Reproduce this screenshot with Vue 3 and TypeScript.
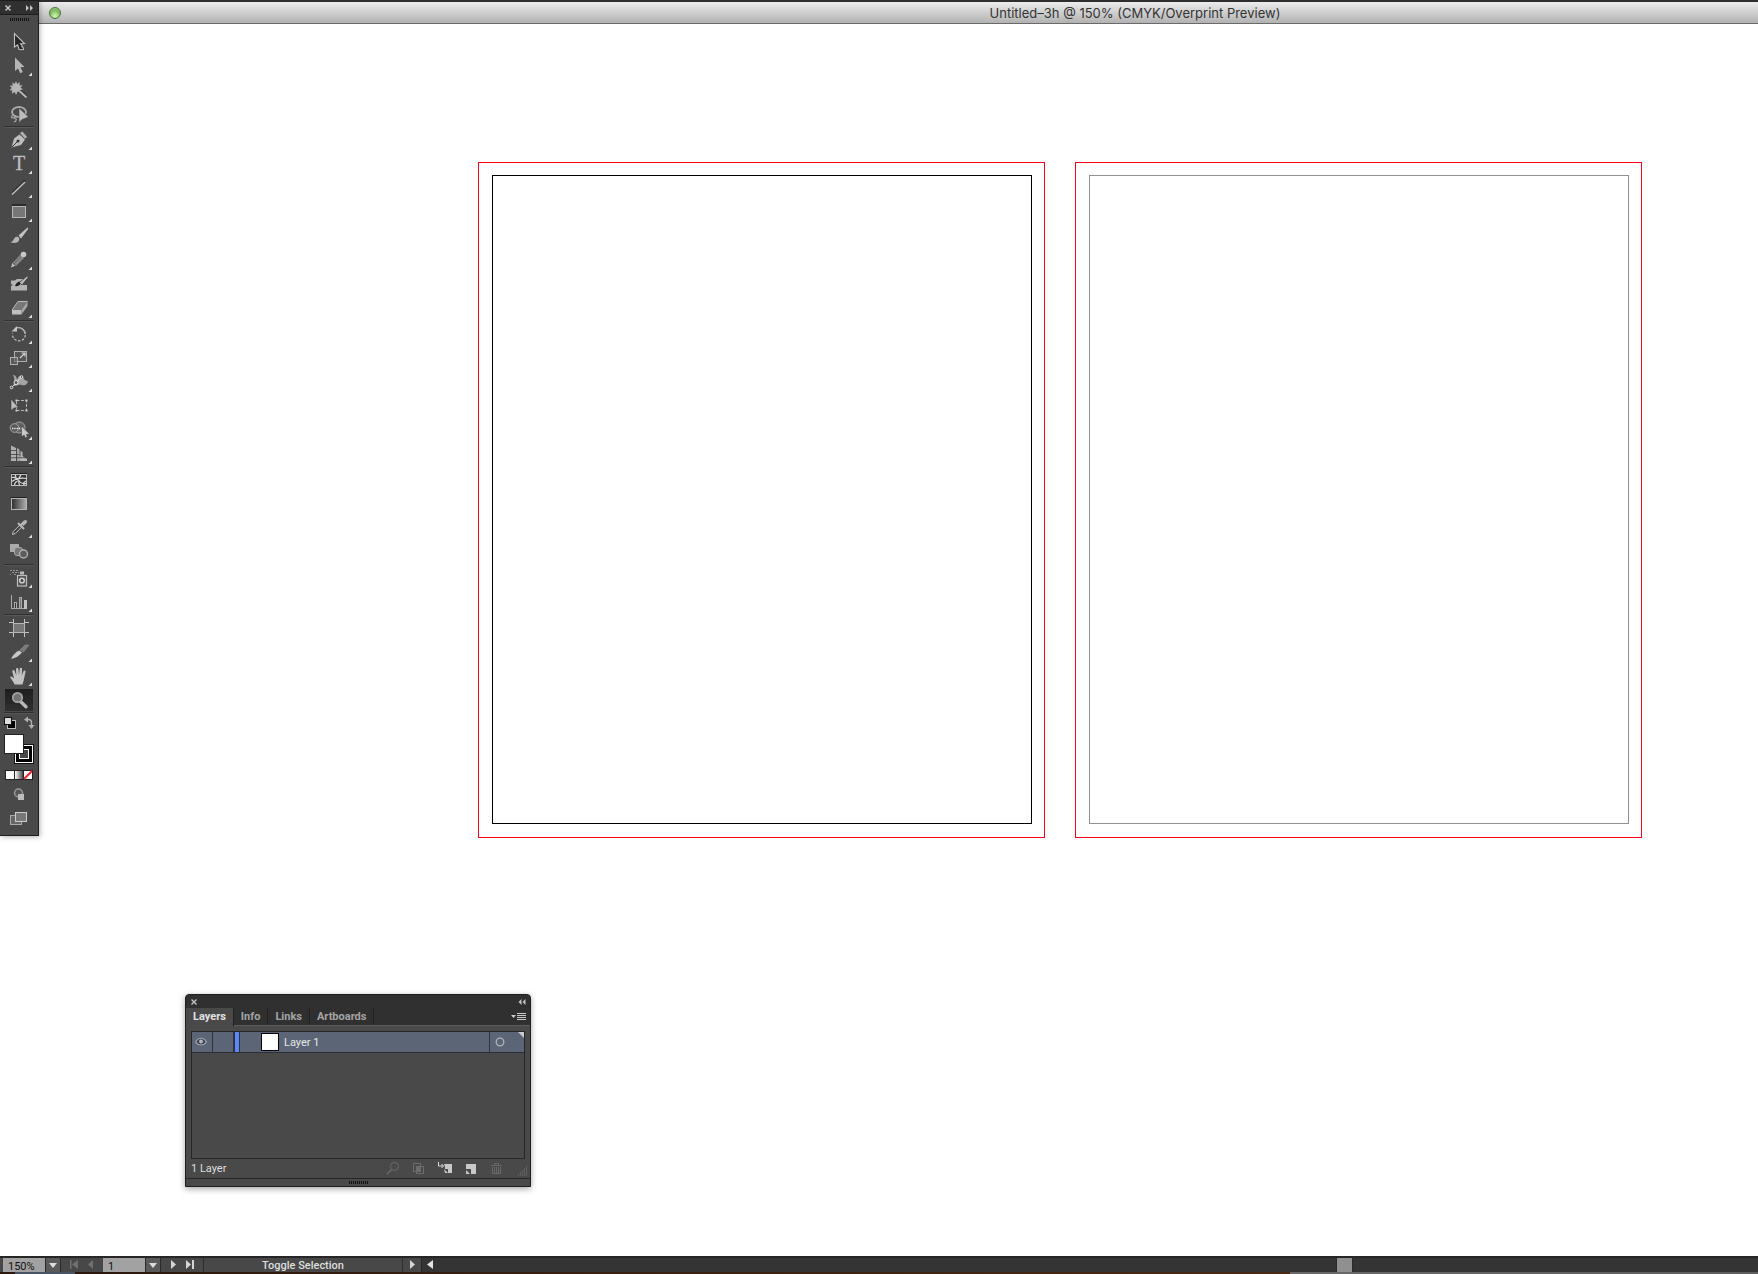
<script setup lang="ts">
import { ref } from 'vue'

interface Tool {
  name: string
  art: string
  more?: boolean
}

const groups: Tool[][] = [
  [
    { name: 'Selection', art: '<path d="M14.5 3.5V17l3.2-2.2 1.3 4.6 1.6.4 2.9-.2-.6-2.6-.9-.2v-1.5l-1.5-1.5 4-.3z" fill="#262626" stroke="#c4c4c4" stroke-width="1.1"/>' },
    { name: 'Direct Selection', more: true, art: '<path d="M15 3.5V17l3-2.6 2.2 4.8 2.6-1.2-2.3-4.7 4-.4z" fill="#b4b4b4"/>' },
    { name: 'Magic Wand', art: '<path d="M16 3l1.200 3 2.600-2-.3 3.200 3.200.3-2.300 2 2.600 2-3.300.4.7 2.800-2.600-1.500L16 17l-1.300-3-2.900 1.700.5-3.100-2.800-.7 2.300-1.800-2.200-2.300 3.200-.2-.5-3.400 2.400 1.800z" fill="#b6b6b6"/><path d="M20 13l6.500 6.400" stroke="#222" stroke-width="3"/><path d="M19.500 13l7 6.500" stroke="#b6b6b6" stroke-width="2.200"/>' },
    { name: 'Lasso', art: '<ellipse cx="19" cy="10" rx="7" ry="5" fill="none" stroke="#aaa" stroke-width="1.8"/><path d="M13 13.500c-2 0-2 2.500 0 2.500s3-2 1-2.500M14 16c3 0 3 3 0 4" fill="none" stroke="#aaa" stroke-width="1.200"/><path d="M19 6v14.500l3-3 6.500-2.500z" fill="#bdbdbd" stroke="#444" stroke-width=".6"/>' },
  ],
  [
    { name: 'Pen', more: true, art: '<path d="M11.500 19.500L14 10.500l5.500-4 5.500 5-4 5.500z" fill="#bebebe"/><path d="M19.500 5l3-2 5 6-2.500 2.200z" fill="#b0b0b0" stroke="#3c3c3c" stroke-width=".6"/><path d="M12 19l6-6" stroke="#333"/><circle cx="18" cy="13" r="1.500" fill="#333"/>' },
    { name: 'Type', more: true, art: '<text x="19" y="18" text-anchor="middle" font-family="Liberation Serif, serif" font-size="20" fill="#bdbdbd" stroke="#bdbdbd" stroke-width=".3">T</text>' },
    { name: 'Line Segment', more: true, art: '<path d="M12 17L25 4.500" stroke="#262626" stroke-width="1.500"/><path d="M12 18.500L25 6" stroke="#bbb" stroke-width="1.700"/>' },
    { name: 'Rectangle', more: true, art: '<path d="M12 5h14" stroke="#222" stroke-width="1.500"/><rect x="12.500" y="6.500" width="13" height="11" fill="#777" stroke="#b8b8b8"/>' },
    { name: 'Paintbrush', art: '<path d="M18.500 11.500l9-8 .8 1.200-7.300 9.800z" fill="#c2c2c2"/><path d="M10 18c3 0 3-2 4.500-4 2-2.500 6-.5 4.500 2.500-1.500 3-6 3-9 1.500z" fill="#b4b4b4"/>' },
    { name: 'Pencil', more: true, art: '<path d="M11 19.500l1.500-5 3.500 3z" fill="#c4c4c4"/><path d="M12.500 14.500l8-8.500 4 4-8.500 8.500z" fill="#858585" stroke="#333" stroke-width=".5"/><path d="M13.500 16.500l8.500-9" stroke="#6a6a6a"/><circle cx="23.500" cy="6.500" r="2.800" fill="#c8c8c8"/>' },
    { name: 'Blob Brush', art: '<path d="M11 8.500h4l2-1.500h6v6h4v5.500H11V14l2-1-2-1z" fill="#b4b4b4"/><path d="M15 14c1-3.500 3.500-5 6-4.500l-.5 2.500c-1.500 2-3.500 2.500-5.500 2z" fill="#222"/><path d="M19.500 10.500l7.500-6.500 1.500 1L22 13z" fill="#bdbdbd" stroke="#2c2c2c" stroke-width=".7"/>' },
    { name: 'Eraser', more: true, art: '<path d="M18 5.500h9.500l-6 8.500H12z" fill="#777"/><path d="M12 14h9.500v4.500H12z" fill="#c0c0c0"/><path d="M21.500 14l6-8.500v4.500l-6 8.500z" fill="#a8a8a8"/><path d="M12 14l6-8.500h9.500" fill="none" stroke="#bbb"/>' },
  ],
  [
    { name: 'Rotate', more: true, art: '<path d="M15 6.500c5-2.500 10 1 10.300 5.500" fill="none" stroke="#b8b8b8" stroke-width="1.300"/><path d="M25.300 13c-.5 8-13 8-13-1.500" fill="none" stroke="#b8b8b8" stroke-width="1.300" stroke-dasharray="2.500 1.500"/><path d="M17 4v5.500h-5.500z" fill="#c4c4c4"/>' },
    { name: 'Scale', more: true, art: '<rect x="14.500" y="5.500" width="12" height="10" fill="#555" stroke="#b0b0b0"/><rect x="10.500" y="11.500" width="7" height="7" fill="#666" fill-opacity=".6" stroke="#b0b0b0"/><path d="M20 12l5-5M21.500 7H25v3.500" fill="none" stroke="#d0d0d0" stroke-width="1.200"/>' },
    { name: 'Width', more: true, art: '<path d="M13 5c2.500-.5 3.500 2 4 5 1-3 2.500-5 4.500-4 3 1 1.500 5 6.500 5-1 4-3 5-6.500 4-3-1-5 1-8 1 1-4 1.500-7-.5-11z" fill="#a4a4a4"/><path d="M11.500 17.500l10-10.500" stroke="#ddd"/><g fill="#444" stroke="#e4e4e4"><circle cx="11.500" cy="17.500" r="1.300"/><circle cx="16" cy="12.500" r="2" fill="#555"/><circle cx="21.500" cy="7" r="1.300"/></g>' },
    { name: 'Free Transform', art: '<rect x="16.500" y="6.500" width="10" height="10" fill="none" stroke="#b5b5b5" stroke-dasharray="3 1.500"/><path d="M15.500 5.500h2v2h-2zM25.500 5.500h2v2h-2zM25.500 15.500h2v2h-2zM15.500 15.500h2v2h-2z" fill="#ccc"/><path d="M11 5v11.500l3-2.500 4.500-.5z" fill="#bbb" stroke="#333" stroke-width=".5"/>' },
    { name: 'Shape Builder', more: true, art: '<g fill="#606060" stroke="#aaa"><circle cx="19.500" cy="9.500" r="5.500"/><circle cx="14.500" cy="10" r="4.300" fill="#585858"/></g><path d="M12 10.500h11" stroke="#eee" stroke-width="1.300" stroke-dasharray="1.300 1"/><path d="M21.500 8v11l2.500-2 1.500 3 2-1-1.200-2.500 3.200-.5z" fill="#c8c8c8" stroke="#333" stroke-width=".5"/>' },
    { name: 'Perspective Grid', more: true, art: '<path d="M11 3.500l5 2.500V19h-5z" fill="#b0b0b0"/><path d="M17 6l2.500 1.500V14l4 1.500V19H17z" fill="#a4a4a4"/><path d="M20.500 9l2 1V14l4.500 3v2h-6.500z" fill="#b8b8b8"/><path d="M11 8.500h5M11 12.500h8M11 15.700h15" stroke="#404040" stroke-width=".8"/>' },
  ],
  [
    { name: 'Mesh', art: '<path d="M11 5.500h16" stroke="#222"/><rect x="11.500" y="6.500" width="15" height="11" fill="#363636" stroke="#bcbcbc"/><path d="M12 9.500c5-1 6 2 7.500 4s4 2.500 7 2M21 7c-3 3-3 6-1.500 10.500M12 13.500c4-3 9-4 14.500-3M14.500 17c0-2 1-3 3-4M15 7c1 1 1 2 0 3M24 17c-1-2 0-3 2-4" fill="none" stroke="#d8d8d8" stroke-width="1.200"/>' },
    { name: 'Gradient', art: '<defs><linearGradient id="toolGradient"><stop stop-color="#2c2c2c"/><stop offset="1" stop-color="#b0b0b0"/></linearGradient></defs><path d="M11 5.500h16" stroke="#222"/><rect x="11.500" y="6.500" width="15" height="11" fill="url(#toolGradient)" stroke="#b4b4b4"/>' },
    { name: 'Eyedropper', more: true, art: '<path d="M12.500 18.500l.8-3 6.500-6.500 2 2-6.500 6.500z" fill="#444" stroke="#c4c4c4"/><path d="M18 7l6 6M20.500 9.500l3.500-3.500" stroke="#bbb" stroke-width="2"/><path d="M21 7.500L24 4.500c2-1.500 4 .5 2.500 2.500L23.500 10z" fill="#b4b4b4"/>' },
    { name: 'Blend', art: '<path d="M10 4h9v8h-9z" fill="#aaa"/><rect x="14.500" y="7.500" width="8" height="8" rx="2.500" fill="#777" stroke="#a8a8a8"/><circle cx="23.500" cy="14" r="4" fill="#5c5c5c" stroke="#b0b0b0" stroke-width="1.500"/>' },
  ],
  [
    { name: 'Symbol Sprayer', more: true, art: '<path d="M10 4.500h2m1 0h2m1 0h2M12 6.500h2m1 0h2m1 0h1M10 8.500h1m3 0h2" stroke="#999" stroke-width="1.200"/><path d="M20 5.500h4v3h-4z" fill="#bbb"/><rect x="17.500" y="9.500" width="9" height="10.500" fill="#505050" stroke="#bdbdbd" stroke-width="1.200"/><circle cx="22" cy="14.500" r="2.300" fill="#444" stroke="#ccc" stroke-width="1.600"/>' },
    { name: 'Column Graph', more: true, art: '<path d="M11.500 5v14M11 18.500h16" stroke="#aaa"/><rect x="14.500" y="12.500" width="2" height="6" fill="#333" stroke="#aaa"/><rect x="19.500" y="7.500" width="2" height="11" fill="#777" stroke="#aaa"/><rect x="24" y="10" width="3" height="9" fill="#c2c2c2"/>' },
  ],
  [
    { name: 'Artboard', art: '<path d="M9 6.500h5M24 6.500h5M9 16.500h4M25 16.500h4M13.500 3v4M24.500 3v4M13.500 17v4M24.500 17v4" stroke="#c4c4c4"/><rect x="13.500" y="7.500" width="11" height="9" fill="#777" stroke="#b4b4b4"/>' },
    { name: 'Slice', more: true, art: '<path d="M11 19c2-4.500 5-7 8-8.500l3 2c-3 3.500-6 5.500-11 6.500z" fill="#c8c8c8"/><path d="M20 10L25 5h4l-5.500 7z" fill="#7a7a7a" stroke="#999" stroke-width=".5"/>' },
    { name: 'Hand', more: true, art: '<path d="M14.500 20.500c-1-3-3.500-5.500-4.500-7.500 1-1.500 2.500 0 4 1.500L12.300 7c.3-1.500 2-1.200 2.400 0l1.600 4.500L16 5c.2-1.500 2.200-1.500 2.400 0l.6 6 .8-6.500c.4-1.300 2.200-1 2.300.5l-.3 6.500 1.700-4.500c.7-1.200 2.300-.5 2 1l-1.500 7c-.3 2-1 3.500-1.500 5.500z" fill="#c2c2c2"/>' },
    { name: 'Zoom', art: '<path d="M21 14l5 4.800" stroke="#b8b8b8" stroke-width="3.400" stroke-linecap="round"/><circle cx="17.500" cy="9.500" r="4.700" fill="#747474" stroke="#a4a4a4" stroke-width="1.700"/>' },
  ],
]

const activeTool = ref('Zoom')
const tabs = ['Layers', 'Info', 'Links', 'Artboards']
const activeTab = ref('Layers')
const zoomLevel = ref('150%')
const artboard = ref('1')
</script>

<template>
  <div class="workspace">
    <header class="titlebar">
      <button class="maximize" aria-label="Zoom window"></button>
      <h1>Untitled–3h @ 150% (CMYK/Overprint Preview)</h1>
    </header>

    <main class="canvas">
      <div class="bleed"><div class="artboard current"></div></div>
      <div class="bleed"><div class="artboard"></div></div>
    </main>

    <footer class="status">
      <div class="status-row">
        <input v-model="zoomLevel" class="field" aria-label="Zoom level" />
        <button class="drop" aria-label="Zoom presets"><svg width="14" height="14"><path d="M3 5h8l-4 5z" fill="#ddd" /></svg></button>
        <div class="nav">
          <button aria-label="First artboard"><svg width="14" height="14"><path d="M4 2h1.500v9H4zM12 2v9L6 6.500z" fill="#707070" /></svg></button>
          <button aria-label="Previous artboard"><svg width="14" height="14"><path d="M9 2v9L4 6.500z" fill="#707070" /></svg></button>
        </div>
        <input v-model="artboard" class="field" aria-label="Artboard number" />
        <button class="drop" aria-label="Artboard list"><svg width="14" height="14"><path d="M3 5h8l-4 5z" fill="#ddd" /></svg></button>
        <div class="nav next">
          <button aria-label="Next artboard"><svg width="14" height="14"><path d="M4 2v9l5-4.500z" fill="#d4d4d4" /></svg></button>
          <button aria-label="Last artboard"><svg width="14" height="14"><path d="M3 2v9l5-4.500zM9 2h2v9H9z" fill="#d4d4d4" /></svg></button>
        </div>
        <span class="message">Toggle Selection</span>
        <button class="more" aria-label="Status options"><svg width="16" height="14"><path d="M6 2v9l5-4.500z" fill="#d4d4d4" /></svg></button>
        <div class="scroll">
          <button aria-label="Scroll left"><svg width="14" height="14"><path d="M11 2v9L5 6.500z" fill="#e4e4e4" /></svg></button>
          <div class="track"><div class="thumb"></div></div>
        </div>
      </div>
      <div class="desk"></div>
    </footer>

    <aside class="tools" aria-label="Tools">
      <div class="tools-head">
        <button aria-label="Close tools"><svg width="8" height="8"><path d="M1.500 1.500l5 5M6.500 1.500l-5 5" stroke="#c4c4c4" stroke-width="1.500" /></svg></button>
        <button aria-label="Expand tools"><svg width="8" height="8"><path d="M1 1l3 3-3 3zM5 1l3 3-3 3z" fill="#c4c4c4" /></svg></button>
      </div>
      <div class="tools-grip"><span class="ticks"></span></div>
      <div v-for="(group, i) in groups" :key="i" class="tool-group">
        <button
          v-for="tool in group"
          :key="tool.name"
          class="tool"
          :class="{ active: tool.name === activeTool }"
          :aria-label="tool.name"
          @click="activeTool = tool.name"
        >
          <svg width="38" height="24" viewBox="0 0 38 24">
            <g v-html="tool.art"></g>
            <path v-if="tool.more" d="M32 18.500V22h-3.500z" fill="#ddd" />
          </svg>
        </button>
      </div>
      <svg class="swatches" width="38" height="69" viewBox="0 0 38 69" role="img" aria-label="Fill and stroke">
        <defs>
          <linearGradient id="modeGradient"><stop stop-color="#fff" /><stop offset="1" stop-color="#444" /></linearGradient>
        </defs>
        <rect x="7.500" y="6.500" width="8" height="8" fill="#000" stroke="#bbb" />
        <rect x="4.500" y="3.500" width="7" height="7" fill="#ddd" stroke="#111" />
        <path d="M26 5.500h2.500q3 0 3 3V13" fill="none" stroke="#b0b0b0" stroke-width="1.300" />
        <path d="M28 2.500v6l-4-3zM28.500 11h6l-3 4z" fill="#b0b0b0" />
        <rect x="14" y="30" width="20" height="20" fill="#111" />
        <rect x="15.500" y="31.500" width="17" height="17" fill="#000" stroke="#fff" />
        <rect x="19.500" y="35.500" width="9" height="9" fill="#484848" stroke="#fff" />
        <rect x="4" y="20" width="20" height="20" fill="#222" />
        <rect x="5" y="21" width="18" height="18" fill="#fff" />
        <rect x="5" y="56" width="28" height="10" fill="#222" />
        <rect x="6" y="57" width="8" height="8" fill="#fff" />
        <rect x="15" y="57" width="8" height="8" fill="url(#modeGradient)" />
        <rect x="24" y="57" width="8" height="8" fill="#fff" />
        <path d="M24 65l8-8" stroke="#f0202c" stroke-width="2" />
      </svg>
      <button class="tool" aria-label="Drawing mode">
        <svg width="38" height="24"><circle cx="18.500" cy="10" r="4" fill="#555" stroke="#999" stroke-width="1.500" /><path d="M18 11h6v6h-6z" fill="#bcbcbc" /></svg>
      </button>
      <button class="tool" aria-label="Screen mode">
        <svg width="38" height="24"><rect x="10.500" y="8.500" width="11" height="9" fill="#666" stroke="#aaa" /><rect x="15.500" y="5.500" width="11" height="9" fill="#777" stroke="#ccc" /></svg>
      </button>
    </aside>

    <section class="panel" aria-label="Layers panel">
      <div class="panel-head">
        <button aria-label="Close panel"><svg width="8" height="8"><path d="M1.500 1.500l5 5M6.500 1.500l-5 5" stroke="#c4c4c4" stroke-width="1.400" /></svg></button>
        <button aria-label="Collapse panel"><svg width="8" height="8"><path d="M3.500 1l-3 3 3 3zM7.500 1l-3 3 3 3z" fill="#c4c4c4" /></svg></button>
      </div>
      <div class="tabs">
        <button v-for="tab in tabs" :key="tab" class="tab" :class="{ on: tab === activeTab }" @click="activeTab = tab">{{ tab }}</button>
        <button class="menu" aria-label="Panel menu"><svg width="15" height="10"><path d="M0 3h5L2.500 6z" fill="#ccc" /><path d="M6 1.500h9M6 3.500h9M6 5.500h9M6 7.500h9" stroke="#ccc" /></svg></button>
      </div>
      <div class="list">
        <div class="layer">
          <button class="eye" aria-label="Toggle visibility"><svg width="12" height="10"><path d="M.5 5c3-5 8-5 11 0-3 4-8 4-11 0z" fill="#3c4350" stroke="#a4a8ae" stroke-width="1.200" /><circle cx="6" cy="4.500" r="2" fill="#b4b7bc" /></svg></button>
          <span class="lock"></span>
          <span class="tint"></span>
          <span class="thumbnail"></span>
          <span class="layer-name">Layer 1</span>
          <button class="target" aria-label="Target layer"><svg width="10" height="10"><circle cx="5" cy="5" r="3.800" fill="none" stroke="#b0b4ba" stroke-width="1.300" /></svg></button>
          <svg class="corner" width="6" height="6"><path d="M0 0h6v6z" fill="#ccc" /></svg>
        </div>
      </div>
      <div class="panel-foot">
        <span class="count">1 Layer</span>
        <div class="actions">
          <button aria-label="Locate object"><svg width="14" height="14"><circle cx="8.500" cy="5.500" r="4" fill="none" stroke="#6c6c6c" /><path d="M5.500 8.500L1 13" stroke="#6c6c6c" stroke-width="1.300" /></svg></button>
          <button aria-label="Clipping mask"><svg width="14" height="14"><rect x="1.500" y="2.500" width="7" height="8" fill="none" stroke="#6c6c6c" /><rect x="4.500" y="5.500" width="7" height="7" fill="none" stroke="#6c6c6c" /><path d="M5 5h4v6H5z" fill="#6c6c6c" /></svg></button>
          <button aria-label="New sublayer"><svg width="14" height="14"><path d="M6 3h8v9h-4V8H7V6z" fill="#c8c8c8" /><path d="M6 8l4 4H7z" fill="#c8c8c8" /><path d="M.5 1v4h5M3.500 3l2 2-2 2" fill="none" stroke="#ddd" /></svg></button>
          <button aria-label="New layer"><svg width="14" height="14"><path d="M2 3h10v10H7V8H2z" fill="#c8c8c8" /><path d="M2 9l4 4H2z" fill="#c8c8c8" /></svg></button>
          <button aria-label="Delete layer"><svg width="14" height="14"><path d="M1 4.500h11M4.500 4V2.500h4V4M2.500 6v6.500h8V6M4.500 6v6M6.500 6v6M8.500 6v6" fill="none" stroke="#686868" /></svg></button>
        </div>
        <svg class="resize" width="10" height="10"><path d="M8 1h1M6 3h3M4 5h5M2 7h7M0 9h9" stroke="#777" stroke-dasharray="1 1" /></svg>
      </div>
      <div class="panel-grip"><span class="ticks"></span></div>
    </section>
  </div>
</template>

<style>
body { margin: 0; background: #fff; }
</style>

<style scoped>
* { box-sizing: border-box; }
button { display: flex; align-items: center; justify-content: center; padding: 0; border: 0; background: none; font: inherit; color: inherit; }
svg { display: block; flex: none; }
.workspace { position: relative; display: flex; flex-direction: column; min-height: 100vh; overflow: hidden; font: 11px/14px Roboto, sans-serif; background: #fff; }

.titlebar { display: flex; align-items: center; height: 24px; padding-left: 49px; border-top: 2px solid #2e2e2e; border-bottom: 1px solid #6a6a6a; background: linear-gradient(#ececec, #b2b2b2); }
.maximize { width: 12px; height: 12px; border: 1px solid #4c7040; border-radius: 50%; background: radial-gradient(circle at 50% 80%, #d4f5b4, #7cba5c 60%, #a8d890); }
h1 { flex: 1; margin: 0; padding-left: 451px; text-align: center; font: 13px/20px Inter, sans-serif; color: #333; white-space: nowrap; }

.canvas { flex: 1; display: flex; align-items: flex-start; justify-content: center; gap: 30px; padding: 138px 0 40px 361px; }
.bleed { flex: none; padding: 12px 12px 13px 13px; border: 1px solid #fa0020; }
.artboard { width: 540px; height: 649px; border: 1px solid #919191; }
.artboard.current { border-color: #000; }

.status { flex: none; }
.status-row { display: flex; height: 16px; padding-left: 3px; border-top: 2px solid #262626; background: #484848; color: #dedede; }
.field { width: 42px; min-width: 0; height: 14px; padding: 2px 4px 0 5px; border: 0; border-radius: 0; background: #a2a2a2; font: 11px/12px Roboto, sans-serif; color: #111; outline: 0; }
.drop { width: 16px; border: solid #2b2b2b; border-width: 0 1px; background: #5a5a5a; }
.nav { display: flex; gap: 4px; width: 42px; padding-left: 5px; }
.nav.next { width: 42px; padding-left: 6px; gap: 2px; }
.message { width: 200px; border-left: 1px solid #2e2e2e; border-right: 1px solid #2e2e2e; text-align: center; font-weight: 500; line-height: 16px; }
.more { width: 18px; }
.scroll { flex: 1; display: flex; border-left: 1px solid #262626; background: #343434; }
.track { flex: 1; display: flex; padding-left: 2px; }
.thumb { width: 17px; margin-left: 68%; background: #909090; border: solid #2a2a2a; border-width: 0 1px; }
.desk { height: 2px; background: linear-gradient(90deg, #2c180d 0 15px, #485464 15px 75px, #2c180d 75px, #4a2a15 73.4%, #696969 73.4%, #5e5e5e); }

.tools { position: absolute; left: 0; top: 0; width: 39px; padding-bottom: 4px; border-right: 1px solid #1e1e1e; border-bottom: 1px solid #1e1e1e; background: #494949; box-shadow: 1px 1px 5px rgba(0, 0, 0, .3); }
.tools-head { display: flex; align-items: center; justify-content: space-between; height: 15px; padding: 0 5px 0 4px; border-top: 1px solid #1c1c1c; border-bottom: 1px solid #1c1c1c; background: #303030; }
.tools-grip { display: flex; justify-content: center; height: 15px; padding-top: 3px; }
.ticks { width: 19px; height: 3px; background: repeating-linear-gradient(90deg, #111 0 1px, #494949 1px 2px); }
.tool-group { padding-bottom: 2px; background: linear-gradient(#303030 50%, #585858 50%) 4px 100% / 30px 2px no-repeat; }
.tool { width: 38px; height: 24px; }
.tool.active { background: linear-gradient(#1e1e1e, #303030) 5px 1px / 28px 22px no-repeat; }

.panel { position: absolute; left: 185px; top: 994px; width: 346px; border: 1px solid #1e1e1e; border-radius: 4px 4px 0 0; background: #494949; color: #dedede; box-shadow: 0 2px 6px rgba(0, 0, 0, .35); }
.panel-head { display: flex; align-items: center; justify-content: space-between; height: 13px; padding: 0 4px; background: #303030; border-radius: 3px 3px 0 0; }
.tabs { display: flex; height: 18px; background: #303030; border-bottom: 1px solid #5c5c5c; }
.tab { padding: 1px 7px 0; border-right: 1px solid #222; font-weight: 700; color: #a4a4a4; }
.tab.on { height: 18px; padding-top: 0; background: #494949; color: #e2e2e2; }
.menu { margin: 0 4px 0 auto; }
.list { height: 128px; margin: 5px 5px 0; border: 1px solid #262626; }
.layer { position: relative; display: flex; align-items: center; height: 21px; border-bottom: 1px solid #2a2e34; background: #5b6575; }
.eye { width: 21px; height: 20px; padding-right: 2px; border-right: 1px solid #2f343c; }
.lock { width: 21px; height: 20px; border-right: 1px solid #2f343c; }
.tint { width: 6px; height: 20px; border: solid #2f343c; border-width: 0 1px; background: #5a86ff; }
.thumbnail { width: 18px; height: 18px; margin-left: 21px; border: 1px solid #000; background: #fff; }
.layer-name { margin-left: 5px; padding-top: 2px; color: #e8e8e8; }
.target { width: 20px; height: 20px; margin: 0 15px 0 auto; border-left: 1px solid #2f343c; }
.corner { position: absolute; top: 0; right: 0; }
.panel-foot { display: flex; align-items: center; height: 19px; padding: 0 0 2px 5px; }
.count { padding-top: 2px; }
.actions { display: flex; gap: 12px; margin-left: auto; }
.resize { align-self: flex-end; margin: 0 2px 0 14px; }
.panel-grip { display: flex; justify-content: center; height: 8px; padding-top: 2px; border-top: 1px solid #262626; }
</style>
